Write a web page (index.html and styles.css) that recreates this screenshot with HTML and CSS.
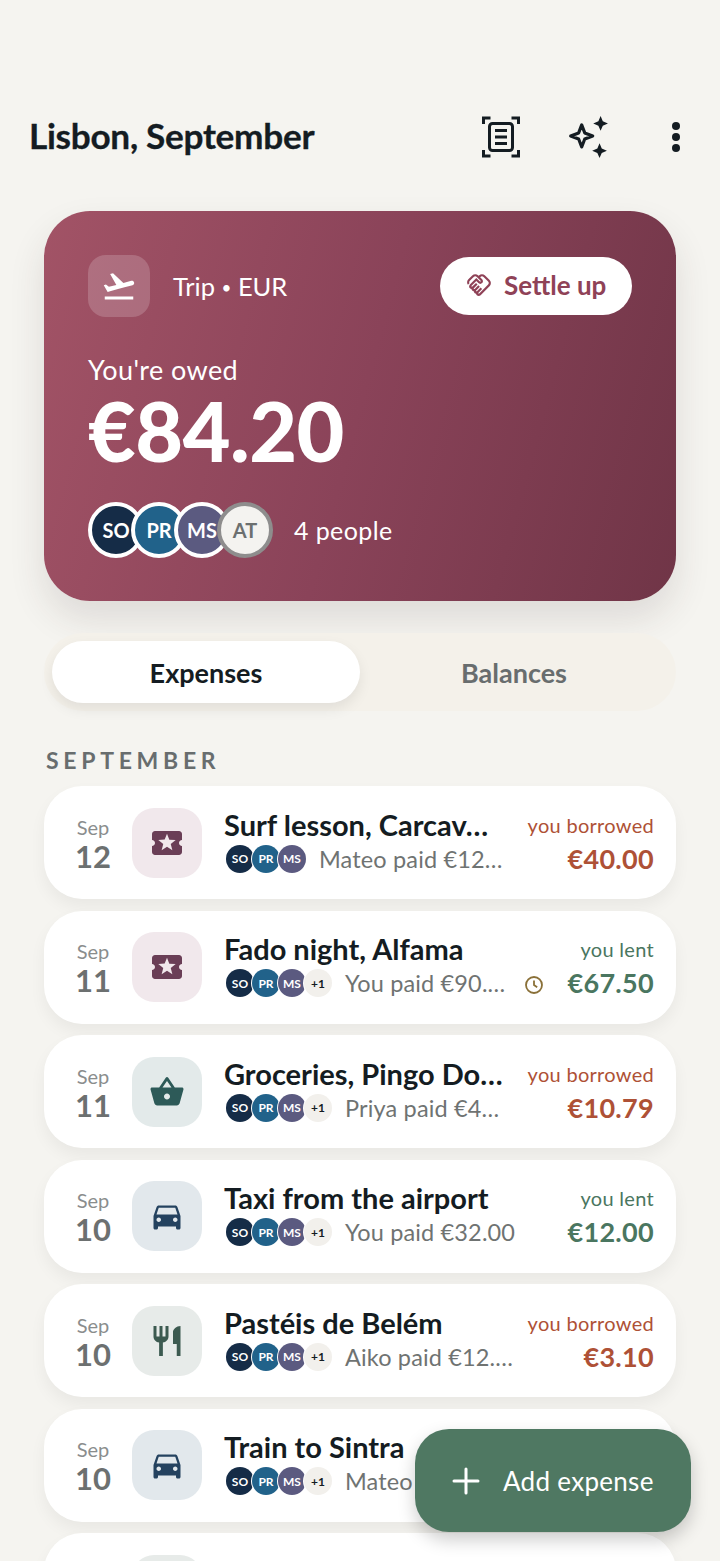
FILE: index.html
```html
<!DOCTYPE html>
<html lang="en">
<head>
<meta charset="utf-8">
<title>Lisbon, September</title>
<link rel="stylesheet" href="styles.css">
</head>
<body>
<svg class="defs" width="0" height="0" aria-hidden="true">
  <symbol id="i-ticket" viewBox="0 0 24 24"><path d="M20 12c0-1.1.9-2 2-2V6c0-1.1-.9-2-2-2H4c-1.1 0-1.99.9-1.99 2v4c1.1 0 1.99.9 1.99 2s-.89 2-2 2v4c0 1.1.9 2 2 2h16c1.1 0 2-.9 2-2v-4c-1.1 0-2-.9-2-2zm-4.42 4.8L12 14.5l-3.58 2.3 1.08-4.12-3.29-2.69 4.24-.25L12 5.8l1.54 3.95 4.24.25-3.29 2.69 1.09 4.11z"/></symbol>
  <symbol id="i-basket" viewBox="0 0 24 24"><path d="M17.21 9l-4.38-6.56c-.19-.28-.51-.42-.83-.42-.32 0-.64.14-.83.43L6.79 9H2c-.55 0-1 .45-1 1 0 .09.01.18.04.27l2.54 9.27c.23.84 1 1.46 1.92 1.46h13c.92 0 1.69-.62 1.93-1.46l2.54-9.27L23 10c0-.55-.45-1-1-1h-4.79zM9 9l3-4.4L15 9H9zm3 8c-1.1 0-2-.9-2-2s.9-2 2-2 2 .9 2 2-.9 2-2 2z"/></symbol>
  <symbol id="i-car" viewBox="0 0 24 24"><path d="M18.92 6.01C18.72 5.42 18.16 5 17.5 5h-11c-.66 0-1.21.42-1.42 1.01L3 12v8c0 .55.45 1 1 1h1c.55 0 1-.45 1-1v-1h12v1c0 .55.45 1 1 1h1c.55 0 1-.45 1-1v-8l-2.08-5.99zM6.5 16c-.83 0-1.5-.67-1.5-1.5S5.67 13 6.5 13s1.5.67 1.5 1.5S7.33 16 6.5 16zm11 0c-.83 0-1.5-.67-1.5-1.5s.67-1.5 1.5-1.5 1.5.67 1.5 1.5-.67 1.5-1.5 1.5zM5 11l1.5-4.5h11L19 11H5z"/></symbol>
  <symbol id="i-food" viewBox="0 0 24 24"><path d="M11 9H9V2H7v7H5V2H3v7c0 2.12 1.66 3.84 3.75 3.97V22h2.5v-9.03C11.34 12.84 13 11.12 13 9V2h-2v7zm5-3v8h2.5v8H21V2c-2.76 0-5 2.24-5 4z"/></symbol>
</svg>

<main class="page">
  <header class="topbar">
    <h1 class="title">Lisbon, September</h1>
    <div class="actions">
      <svg class="ic-scan" width="38" height="42" viewBox="0 0 38 42" fill="none" stroke="#141c22" stroke-width="3"><path d="M1.500 8V2h7M29.500 2h7v6M1.500 34v6h7M29.500 40h7v-6"/><rect x="7.500" y="7.500" width="23" height="27" rx="3"/><path d="M13 14.500h12M13 21h12M13 27.500h12"/></svg>
      <svg class="ic-spark" width="42" height="42" viewBox="0 0 40 40"><path d="M14 8.500l2.900 7.600 7.600 2.900-7.600 2.900L14 29.500l-2.900-7.600L3.500 19l7.600-2.900z" fill="none" stroke="#141c22" stroke-width="3" stroke-linejoin="round"/><path d="M32 0l2.100 5 4.900 2.100-4.900 2.100L32 14l-2.100-4.800L25 7.100l4.900-2.100zM31 26l2.100 5 4.900 2.100-4.900 2.100L31 40l-2.100-4.800L24 33.100l4.900-2.100z" fill="#141c22"/></svg>
      <svg class="ic-more" width="10" height="32" viewBox="0 0 10 32" fill="#141c22"><circle cx="5" cy="5" r="4"/><circle cx="5" cy="16" r="4"/><circle cx="5" cy="27" r="4"/></svg>
    </div>
  </header>

  <section class="hero">
    <div class="hero-top">
      <div class="hero-kind">
        <span class="hero-tile"><svg width="36" height="36" viewBox="0 0 24 24" fill="#fff"><path d="M2.500 19h19v2h-19zm19.570-9.360c-.21-.8-1.040-1.280-1.840-1.060L14.920 10l-6.900-6.430-1.930.51 4.140 7.170-4.970 1.330-1.970-1.540-1.450.39 1.820 3.160.77 1.330 1.600-.43 5.310-1.420 4.350-1.160L21 11.490c.81-.23 1.280-1.050 1.070-1.850z"/></svg></span>
        <span class="hero-label">Trip <span class="dot">•</span> EUR</span>
      </div>
      <button class="settle"><svg width="26" height="26" viewBox="0 0 24 24" fill="#8f4257"><path d="M12.220 19.850c-.18.18-.5.21-.71 0-.18-.18-.21-.5 0-.71l3.390-3.390-1.410-1.410-3.390 3.390c-.19.2-.51.19-.71 0-.21-.21-.18-.53 0-.71l3.390-3.390-1.410-1.410-3.390 3.390c-.18.18-.5.21-.71 0-.19-.19-.19-.51 0-.71l3.390-3.390-1.420-1.410-3.390 3.390c-.18.18-.5.21-.71 0-.19-.2-.19-.51 0-.71L9.520 8.400l1.870 1.860c.95.95 2.590.94 3.540 0 .98-.98.98-2.560 0-3.540l-1.860-1.860.28-.28c.78-.78 2.050-.78 2.830 0l4.240 4.240c.78.78.78 2.050 0 2.830l-8.200 8.200zm9.610-6.780c1.560-1.560 1.560-4.090 0-5.660l-4.240-4.240c-1.560-1.560-4.090-1.560-5.660 0l-.28.28-.28-.28c-1.560-1.560-4.090-1.560-5.660 0L2.170 6.710C.76 8.120.62 10.290 1.750 11.860l1.450-1.450c-.39-.75-.26-1.700.38-2.330l3.540-3.540c.78-.78 2.050-.78 2.830 0l3.560 3.560c.18.18.21.5 0 .71-.21.21-.53.18-.71 0L9.520 5.570l-5.930 5.920c-.98.97-.98 2.560 0 3.540.39.39.89.64 1.420.71.07.52.3 1.020.7 1.420.4.4.9.63 1.420.7.07.52.3 1.020.7 1.420.4.4.9.63 1.420.7.07.54.31 1.030.71 1.430.47.47 1.100.73 1.770.73.670 0 1.300-.26 1.770-.73l8.210-8.200z"/></svg>Settle up</button>
    </div>
    <p class="owed-label">You're owed</p>
    <p class="owed">€84.20</p>
    <div class="people">
      <div class="stack">
        <span class="face so">SO</span><span class="face pr">PR</span><span class="face ms">MS</span><span class="face at">AT</span>
      </div>
      <span class="people-count">4 people</span>
    </div>
  </section>

  <nav class="tabs">
    <span class="tab tab-on">Expenses</span>
    <span class="tab">Balances</span>
  </nav>

  <h2 class="section">SEPTEMBER</h2>

  <ul class="list">
    <li class="row">
      <div class="date"><span class="mon">Sep</span><span class="day">12</span></div>
      <span class="tile t-ticket"><svg width="36" height="36"><use href="#i-ticket"/></svg></span>
      <div class="main">
        <div class="name">Surf lesson, Carcav…</div>
        <div class="meta"><span class="mini so">SO</span><span class="mini pr">PR</span><span class="mini ms">MS</span><span class="who">Mateo paid €12…</span></div>
      </div>
      <div class="sum owe"><span class="sum-l">you borrowed</span><span class="sum-v">€40.00</span></div>
    </li>
    <li class="row">
      <div class="date"><span class="mon">Sep</span><span class="day">11</span></div>
      <span class="tile t-ticket"><svg width="36" height="36"><use href="#i-ticket"/></svg></span>
      <div class="main">
        <div class="name">Fado night, Alfama</div>
        <div class="meta"><span class="mini so">SO</span><span class="mini pr">PR</span><span class="mini ms">MS</span><span class="mini more">+1</span><span class="who">You paid €90.…</span></div>
      </div>
      <svg class="pending" width="20" height="20" viewBox="0 0 20 20" fill="none" stroke="#8a7038" stroke-width="1.800"><circle cx="10" cy="10" r="8"/><path d="M10 5.500V10l3.200 2.200"/></svg>
      <div class="sum lent"><span class="sum-l">you lent</span><span class="sum-v">€67.50</span></div>
    </li>
    <li class="row">
      <div class="date"><span class="mon">Sep</span><span class="day">11</span></div>
      <span class="tile t-basket"><svg width="36" height="36"><use href="#i-basket"/></svg></span>
      <div class="main">
        <div class="name">Groceries, Pingo Do…</div>
        <div class="meta"><span class="mini so">SO</span><span class="mini pr">PR</span><span class="mini ms">MS</span><span class="mini more">+1</span><span class="who">Priya paid €4…</span></div>
      </div>
      <div class="sum owe"><span class="sum-l">you borrowed</span><span class="sum-v">€10.79</span></div>
    </li>
    <li class="row">
      <div class="date"><span class="mon">Sep</span><span class="day">10</span></div>
      <span class="tile t-car"><svg width="36" height="36"><use href="#i-car"/></svg></span>
      <div class="main">
        <div class="name">Taxi from the airport</div>
        <div class="meta"><span class="mini so">SO</span><span class="mini pr">PR</span><span class="mini ms">MS</span><span class="mini more">+1</span><span class="who">You paid €32.00</span></div>
      </div>
      <div class="sum lent"><span class="sum-l">you lent</span><span class="sum-v">€12.00</span></div>
    </li>
    <li class="row">
      <div class="date"><span class="mon">Sep</span><span class="day">10</span></div>
      <span class="tile t-food"><svg width="36" height="36"><use href="#i-food"/></svg></span>
      <div class="main">
        <div class="name">Pastéis de Belém</div>
        <div class="meta"><span class="mini so">SO</span><span class="mini pr">PR</span><span class="mini ms">MS</span><span class="mini more">+1</span><span class="who">Aiko paid €12.…</span></div>
      </div>
      <div class="sum owe"><span class="sum-l">you borrowed</span><span class="sum-v">€3.10</span></div>
    </li>
    <li class="row">
      <div class="date"><span class="mon">Sep</span><span class="day">10</span></div>
      <span class="tile t-car"><svg width="36" height="36"><use href="#i-car"/></svg></span>
      <div class="main">
        <div class="name">Train to Sintra</div>
        <div class="meta"><span class="mini so">SO</span><span class="mini pr">PR</span><span class="mini ms">MS</span><span class="mini more">+1</span><span class="who">Mateo paid</span></div>
      </div>
    </li>
    <li class="row">
      <div class="date"></div>
      <span class="tile t-food"></span>
    </li>
  </ul>

  <button class="fab"><svg width="28" height="28" viewBox="0 0 28 28" stroke="#fff" stroke-width="3" stroke-linecap="round"><path d="M14 2v24M2 14h24"/></svg>Add expense</button>
</main>
</body>
</html>
```

FILE: styles.css
```css
* { box-sizing: border-box; }
html, body { margin: 0; padding: 0; }
body {
  background: #f5f4f0;
  color: #141c22;
  font-family: "Lato", "Noto Sans", sans-serif;
}
.defs { position: absolute; }
.page {
  position: relative;
  width: 720px;
  height: 1561px;
  padding-top: 104px;
  overflow: hidden;
}
.topbar {
  display: flex;
  align-items: center;
  justify-content: space-between;
  height: 66px;
  padding: 0 39px 0 29px;
}
.title {
  margin: 0 0 4px;
  font-size: 35.200px;
  font-weight: 700;
  letter-spacing: -0.300px;
  -webkit-text-stroke: 0.300px #141c22;
}
.actions { display: flex; align-items: center; }
.ic-scan { margin-right: 47px; }
.ic-spark { margin-right: 62px; }

.hero {
  margin: 41px 44px 0;
  height: 390px;
  padding: 44px;
  border-radius: 46px;
  color: #fff;
  background: linear-gradient(105deg, #a25366 0%, #8a4359 50%, #703547 100%);
  box-shadow: 0 18px 36px rgba(60, 40, 40, 0.12);
}
.hero-top { display: flex; align-items: center; justify-content: space-between; }
.hero-kind { display: flex; align-items: center; gap: 23px; }
.hero-tile {
  display: flex; align-items: center; justify-content: center;
  width: 62px; height: 62px;
  border-radius: 18px;
  background: rgba(255, 255, 255, 0.18);
}
.hero-label { font-size: 25.500px; }
.dot { font-size: 17px; vertical-align: 2px; }
.settle {
  display: flex; align-items: center; gap: 12px;
  width: 192px; height: 58px;
  padding: 0 0 2px 26px;
  border: 0;
  border-radius: 29px;
  background: #fff;
  color: #8f4257;
  font: 700 26px "Lato", sans-serif;
}
.owed-label { margin: 36px 0 0; font-size: 27px; line-height: 34px; letter-spacing: 0.400px; }
.owed { margin: 0; font-size: 82.500px; line-height: 88px; font-weight: 900; letter-spacing: -0.500px; }
.people { display: flex; align-items: center; gap: 21px; margin-top: 27px; }
.stack { display: flex; }
.face {
  display: flex; align-items: center; justify-content: center;
  width: 56px; height: 56px;
  margin-right: -13px;
  border: 4px solid #fff;
  border-radius: 50%;
  color: #fff;
  font-size: 20px;
  font-weight: 700;
}
.face.so { background: #152c47; }
.face.pr { background: #21628a; }
.face.ms { background: #5b5a80; }
.face.at { background: #f4f3f0; color: #6c7070; border-color: #8e8d8d; margin-right: 0; }
.people-count { font-size: 25px; letter-spacing: 0.400px; }

.tabs {
  display: flex;
  height: 78px;
  margin: 32px 44px 0;
  padding: 8px;
  border-radius: 39px;
  background: #f4f1ea;
}
.tab {
  flex: 1;
  display: flex; align-items: center; justify-content: center;
  border-radius: 31px;
  color: #686d6e;
  font-size: 27px;
  font-weight: 700;
}
.tab-on {
  background: #fff;
  color: #141c22;
  box-shadow: 0 6px 14px rgba(0, 0, 0, 0.08);
}
.section {
  margin: 36px 0 0 46px;
  height: 26px;
  color: #686d6e;
  font-size: 23px;
  line-height: 26px;
  font-weight: 700;
  letter-spacing: 4.700px;
}
.list {
  list-style: none;
  margin: 13px 44px 0;
  padding: 0;
  display: flex;
  flex-direction: column;
  gap: 11.500px;
}
.row {
  flex: none;
  display: flex;
  align-items: center;
  height: 113px;
  padding: 0 22px;
  border-radius: 38px;
  background: #fff;
  box-shadow: 0 8px 16px rgba(0, 0, 0, 0.05);
}
.date {
  flex: none;
  display: flex; flex-direction: column; align-items: center;
  width: 54px;
  margin: 2px 12px 0 0;
}
.mon { color: #8a8d8d; font-size: 20px; line-height: 24px; }
.day { color: #6c7070; font-size: 31px; line-height: 34px; font-weight: 700; }
.tile {
  flex: none;
  display: flex; align-items: center; justify-content: center;
  width: 70px; height: 70px;
  margin-right: 22px;
  border-radius: 22px;
}
.t-ticket { background: #f1e8ec; fill: #6a3e56; }
.t-basket { background: #e3eaea; fill: #2d5a58; }
.t-car { background: #e2e8ec; fill: #24425f; }
.t-food { background: #e7ebe9; fill: #3c5a50; }
.main { flex: 1; min-width: 0; margin-bottom: 4px; }
.name {
  font-size: 29px;
  line-height: 34px;
  font-weight: 700;
  white-space: nowrap;
}
.meta { display: flex; align-items: center; margin-top: 2px; padding-left: 2px; height: 30px; }
.mini {
  flex: none;
  display: flex; align-items: center; justify-content: center;
  width: 28px; height: 28px;
  margin-right: -2px;
  border-radius: 50%;
  color: #fff;
  font-size: 12px;
  font-weight: 700;
  box-shadow: 0 0 0 1px #fff;
}
.mini.so { background: #152c47; }
.mini.pr { background: #21628a; }
.mini.ms { background: #5b5a80; }
.mini.more { background: #f2f0ec; color: #141c22; font-size: 12px; }
.who {
  margin-left: 15px;
  color: #6f7372;
  font-size: 23.500px;
  letter-spacing: 0.150px;
  white-space: nowrap;
}
.pending { flex: none; margin: 36px 15px 0 0; }
.sum {
  flex: none;
  display: flex; flex-direction: column; align-items: flex-end;
  margin-left: 8px;
  padding-top: 2px;
}
.sum-l { font-size: 20px; line-height: 27px; letter-spacing: 0.300px; }
.sum-v { margin-top: 2px; font-size: 27px; line-height: 35px; font-weight: 700; letter-spacing: 0.300px; }
.owe { color: #ae5136; }
.lent { color: #4a7660; }
.fab {
  position: absolute;
  left: 415px;
  top: 1429px;
  display: flex; align-items: center; gap: 23px;
  width: 276px; height: 103px;
  padding: 0 0 0 37px;
  border: 0;
  border-radius: 34px;
  background: #4f7862;
  color: #fff;
  font: 400 26px "Lato", sans-serif;
  letter-spacing: 0.300px;
  box-shadow: 0 8px 18px rgba(0, 0, 0, 0.2);
}
```
